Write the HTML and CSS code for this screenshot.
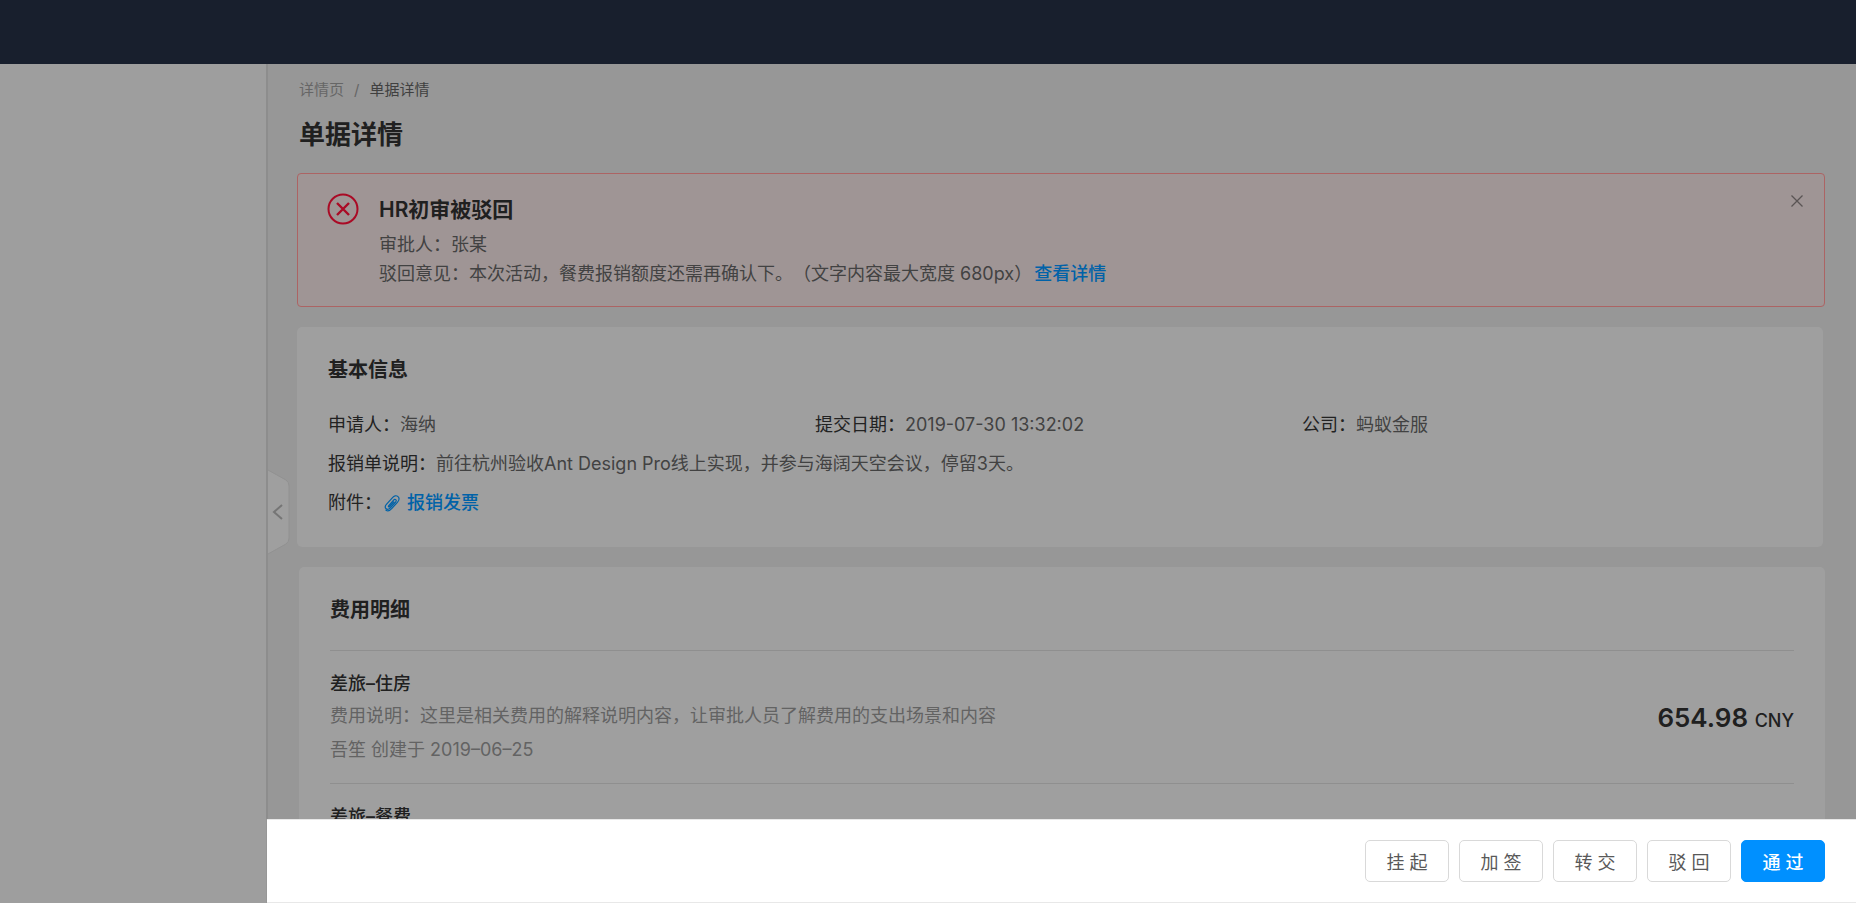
FILE: index.html
```html
<!DOCTYPE html>
<html lang="zh-CN">
<head>
  <meta charset="UTF-8">
  <meta name="viewport" content="width=device-width, initial-scale=1.0">
  <title>单据详情</title>
  <link rel="stylesheet" href="styles.css">
</head>
<body>
  <header class="topbar"></header>
  <div class="layout">
    <aside class="sidebar"></aside>
    <div class="page">
      <button class="collapse" type="button" aria-label="收起">
        <svg width="22" height="86" viewBox="0 0 22 86" fill="none">
          <path d="M0 1 L18 11 Q21 13 21 17 V69 Q21 73 18 75 L0 85" fill="#9f9f9f" stroke="#919191"/>
          <path d="M14 36 L6 43 L14 50" stroke="#757575" stroke-width="2"/>
        </svg>
      </button>

      <main class="content">
        <nav class="breadcrumb">
          <a href="#">详情页</a>
          <span class="sep">/</span>
          <span class="current">单据详情</span>
        </nav>
        <h1>单据详情</h1>

        <section class="alert">
          <svg class="alert-icon" width="32" height="32" viewBox="0 0 32 32" fill="none" stroke="#aa0a25" stroke-width="2">
            <circle cx="16" cy="16" r="14.5"/>
            <path d="M10 10 L22 22 M22 10 L10 22" stroke-width="2.4"/>
          </svg>
          <div class="alert-body">
            <h2>HR初审被驳回</h2>
            <p>审批人：张某</p>
            <p>驳回意见：本次活动，餐费报销额度还需再确认下。（文字内容最大宽度 680px）<a href="#">查看详情</a></p>
          </div>
          <button class="close" type="button" aria-label="关闭">
            <svg width="12" height="12" viewBox="0 0 12 12" stroke="#5a5454" stroke-width="1.3">
              <path d="M0.5 0.5 L11.5 11.5 M11.5 0.5 L0.5 11.5"/>
            </svg>
          </button>
        </section>

        <section class="card info">
          <h2>基本信息</h2>
          <dl>
            <div><dt>申请人：</dt><dd>海纳</dd></div>
            <div><dt>提交日期：</dt><dd>2019-07-30 13:32:02</dd></div>
            <div><dt>公司：</dt><dd>蚂蚁金服</dd></div>
            <div class="full"><dt>报销单说明：</dt><dd>前往杭州验收Ant Design Pro线上实现，并参与海阔天空会议，停留3天。</dd></div>
            <div class="full">
              <dt>附件：</dt>
              <dd>
                <a class="file" href="#">
                  <svg width="16" height="18" viewBox="0 0 16 18" fill="none" stroke="#0062a8" stroke-width="1.2" stroke-linecap="round">
                    <path d="M4.6 11.8 L9.6 6.2 C10.4 5.3 11.3 5.2 11.9 5.8 C12.5 6.4 12.3 7.2 11.6 8 L6.3 13.9 C5 15.4 3.3 15.8 2.1 14.7 C0.9 13.6 1.1 11.9 2.4 10.4 L8.3 3.8 C10.1 1.7 12.3 1.1 14 2.6 C15.6 4.1 15.2 6.3 13.4 8.4 L7.9 14.4 C6.2 16.4 3.9 17.6 2 16.2 M4.6 11.8 C4 12.6 4.9 13.4 5.6 12.6 L9.8 7.9"/>
                  </svg>
                  报销发票
                </a>
              </dd>
            </div>
          </dl>
        </section>

        <section class="card expense">
          <h2>费用明细</h2>
          <ul>
            <li>
              <div>
                <h3>差旅–住房</h3>
                <p>费用说明：这里是相关费用的解释说明内容，让审批人员了解费用的支出场景和内容</p>
                <p class="meta">吾笙 创建于 2019–06–25</p>
              </div>
              <div class="amount">654.98 <small>CNY</small></div>
            </li>
            <li>
              <div>
                <h3>差旅–餐费</h3>
              </div>
            </li>
          </ul>
        </section>
      </main>

      <footer class="actions">
        <button type="button">挂 起</button>
        <button type="button">加 签</button>
        <button type="button">转 交</button>
        <button type="button">驳 回</button>
        <button class="primary" type="button">通 过</button>
      </footer>
    </div>
  </div>
</body>
</html>
```
FILE: styles.css
```css
* { box-sizing: border-box; }

body {
  display: flex;
  flex-direction: column;
  height: 100vh;
  margin: 0;
  overflow: hidden;
  background: #979797;
  color: #424242;
  font-family: Inter, "Noto Sans CJK SC", sans-serif;
  font-size: 18px;
  text-spacing-trim: space-all;
}

h1, h2, h3, p, ul, dl, dd { margin: 0; padding: 0; }
h1, h2, h3 { color: #202020; }
h2 { font-size: 20px; font-weight: 600; line-height: 30px; }
ul { list-style: none; }
a { color: #0062a8; font-weight: 500; text-decoration: none; }
button { font-family: inherit; cursor: pointer; }

.topbar { flex: 0 0 64px; background: #181f2d; }
.layout { display: flex; flex: 1; min-height: 0; }
.sidebar { flex: 0 0 266px; background: #9e9e9e; }
.page { position: relative; display: flex; flex: 1; flex-direction: column; min-width: 0; }

.collapse {
  position: absolute;
  left: 2px;
  top: 405px;
  padding: 0;
  border: 0;
  background: none;
}
.collapse svg { display: block; }

.content {
  flex: 1;
  min-height: 0;
  overflow: hidden;
  padding: 15px 31px 0 29px;
  border-left: 2px solid #8d8d8d;
}

.breadcrumb { display: flex; gap: 10px; padding-left: 2px; font-size: 15px; line-height: 22px; }
.breadcrumb a, .breadcrumb .sep { color: #666; font-weight: 400; }
.breadcrumb .current { color: #404040; }
h1 { margin: 16px 0 20px; padding-left: 2px; font-size: 26px; font-weight: 600; line-height: 36px; }

.alert {
  display: flex;
  gap: 20px;
  padding: 19px 21px 18px 29px;
  border: 1px solid #ac6464;
  border-radius: 4px;
  background: #9f9595;
}
.alert-icon { flex: none; }
.alert-body { flex: 1; padding-top: 2px; }
.alert-body h2 { margin-bottom: 5px; font-size: 21px; }
.alert-body p { line-height: 29px; }
.alert-body a { margin-left: 2px; }
.close { align-self: flex-start; margin-top: 2px; padding: 0; border: 0; background: none; }
.close svg { display: block; }

.card { margin-top: 20px; border-radius: 5px; background: #9f9f9f; }

.info { margin-right: 2px; padding: 28px 34px 25px 31px; }
.info dl { display: grid; grid-template-columns: repeat(3, 1fr); margin-top: 20px; line-height: 39px; }
.info dl div { display: flex; }
.info .full { grid-column: 1 / -1; }
.info dt { color: #222; }
.file { display: flex; align-items: center; gap: 7px; padding-left: 2px; }

.expense { margin-left: 2px; padding: 28px 31px; }
.expense h2 { margin-bottom: 25px; }
.expense li {
  display: flex;
  align-items: center;
  justify-content: space-between;
  padding: 17px 0;
  border-top: 1px solid #8f8f8f;
}
h3 { font-size: 18px; font-weight: 500; line-height: 32px; }
.expense p { color: #636363; line-height: 32px; }
.expense .meta { margin-top: 2px; }
.amount { color: #202020; font-size: 26px; font-weight: 600; }
.amount small { font-size: 18px; font-weight: 500; }

.actions {
  display: flex;
  flex: none;
  justify-content: flex-end;
  gap: 10px;
  margin-left: 1px;
  padding: 20px 31px;
  border-top: 1px solid #e8e8e8;
  border-bottom: 1px solid #e8e8e8;
  background: #fff;
}
.actions button {
  width: 84px;
  height: 42px;
  padding: 0;
  border: 1px solid #d9d9d9;
  border-radius: 5px;
  background: #fff;
  color: #595959;
  font-size: 18px;
}
.actions .primary { border-color: #0090ff; background: #0090ff; color: #fff; font-weight: 500; }
```
